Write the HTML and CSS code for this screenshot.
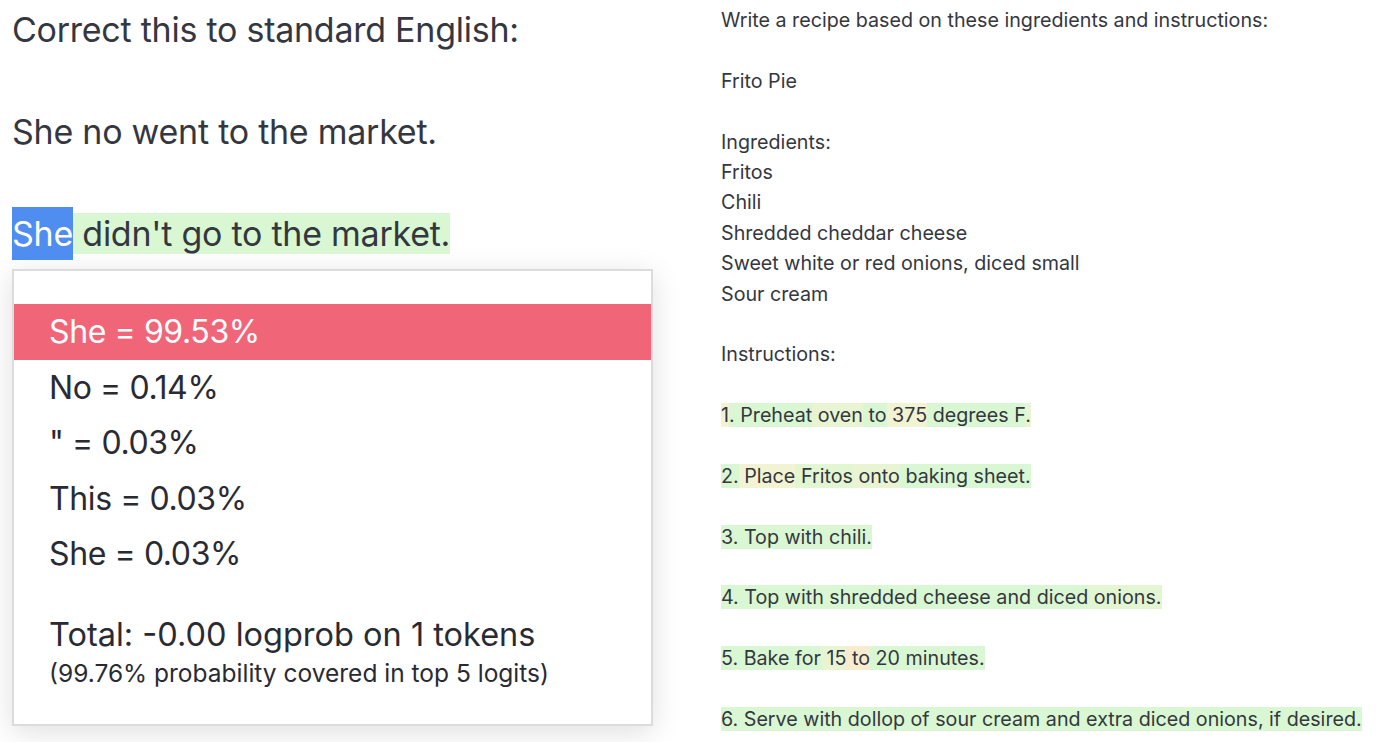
FILE: index.html
```html
<!DOCTYPE html>
<html lang="en">
<head>
<meta charset="utf-8">
<title>Playground probabilities</title>
<link rel="stylesheet" href="styles.css">
</head>
<body>
<main class="page">
  <section class="left">
    <div class="prompt">
      <div class="line">Correct this to standard English:</div>
      <div class="line blank"></div>
      <div class="line">She no went to the market.</div>
      <div class="line blank"></div>
      <div class="line"><span class="tok-sel">She</span><span class="tok-g"> didn't go to the market.</span></div>
    </div>
    <div class="popup">
      <ul class="probs">
        <li class="prob active">She = 99.53%</li>
        <li class="prob">No = 0.14%</li>
        <li class="prob">" = 0.03%</li>
        <li class="prob">This = 0.03%</li>
        <li class="prob">She = 0.03%</li>
      </ul>
      <div class="total">Total: -0.00 logprob on 1 tokens</div>
      <div class="covered">(99.76% probability covered in top 5 logits)</div>
    </div>
  </section>
  <section class="right">
    <div class="rline">Write a recipe based on these ingredients and instructions:</div>
    <div class="rline blank"></div>
    <div class="rline">Frito Pie</div>
    <div class="rline blank"></div>
    <div class="rline">Ingredients:</div>
    <div class="rline">Fritos</div>
    <div class="rline">Chili</div>
    <div class="rline">Shredded cheddar cheese</div>
    <div class="rline">Sweet white or red onions, diced small</div>
    <div class="rline">Sour cream</div>
    <div class="rline blank"></div>
    <div class="rline">Instructions:</div>
    <div class="rline blank"></div>
    <div class="rline"><span class="y1">1</span><span class="g">. Preheat</span><span class="y2"> oven</span><span class="g"> to</span><span class="y1"> 375</span><span class="g"> degrees F</span><span class="y2">.</span></div>
    <div class="rline blank"></div>
    <div class="rline"><span class="g">2.</span><span class="y1"> Place</span><span class="y3"> Fritos</span><span class="y2"> onto</span><span class="g"> baking sheet.</span></div>
    <div class="rline blank"></div>
    <div class="rline"><span class="g">3. Top with chili.</span></div>
    <div class="rline blank"></div>
    <div class="rline"><span class="g">4. Top with shredded cheese and diced</span><span class="y3"> onions.</span></div>
    <div class="rline blank"></div>
    <div class="rline"><span class="g">5. Bake for</span><span class="y2"> 15</span><span class="o1"> to</span><span class="g"> 20 minutes.</span></div>
    <div class="rline blank"></div>
    <div class="rline"><span class="g">6. Serve with dollop of sour cream and extra diced onions, if desired.</span></div>
  </section>
</main>
</body>
</html>
```

FILE: styles.css
```css
* { box-sizing: border-box; }
html, body {
  margin: 0;
  padding: 0;
  background: #ffffff;
  overflow: hidden;
}
body {
  font-family: "Inter", "Roboto", "Liberation Sans", sans-serif;
  color: #353740;
}
.page {
  display: grid;
  grid-template-columns: 676px 1fr;
  height: 742px;
}
.left {
  padding: 4px 0 0 12px;
}
.prompt {
  font-size: 34px;
  line-height: 51px;
  letter-spacing: -0.25px;
}
.line {
  height: 51px;
  white-space: pre;
}
.tok-sel {
  background: #4f8ef0;
  color: #ffffff;
  padding: 6px 0;
}
.tok-g {
  background: #d9f7d2;
}
.popup {
  margin-top: 10px;
  width: 641px;
  height: 457px;
  background: #ffffff;
  border: 2px solid #dcdcdc;
  box-shadow: 0 6px 28px rgba(0, 0, 0, 0.13);
  padding-top: 33px;
  color: #2a2b32;
}
.probs {
  list-style: none;
  margin: 0;
  padding: 0;
}
.prob {
  height: 55.5px;
  line-height: 55.5px;
  font-size: 32px;
  letter-spacing: -0.4px;
  padding-left: 35px;
  white-space: pre;
}
.prob.active {
  background: #f16579;
  color: #ffffff;
}
.total {
  margin-top: 33px;
  font-size: 32.5px;
  line-height: 40px;
  padding-left: 35px;
}
.covered {
  font-size: 24.5px;
  line-height: 36px;
  padding-left: 35px;
}
.right {
  padding: 5px 0 0 45px;
  font-size: 19.7px;
  line-height: 30.4px;
}
.rline {
  height: 30.4px;
  white-space: pre;
}
.g { background: #d9f7d2; }
.y1 { background: #f2f3d3; }
.y2 { background: #e9f5d2; }
.y3 { background: #e3f6d2; }
.o1 { background: #f8ecd0; }
```
